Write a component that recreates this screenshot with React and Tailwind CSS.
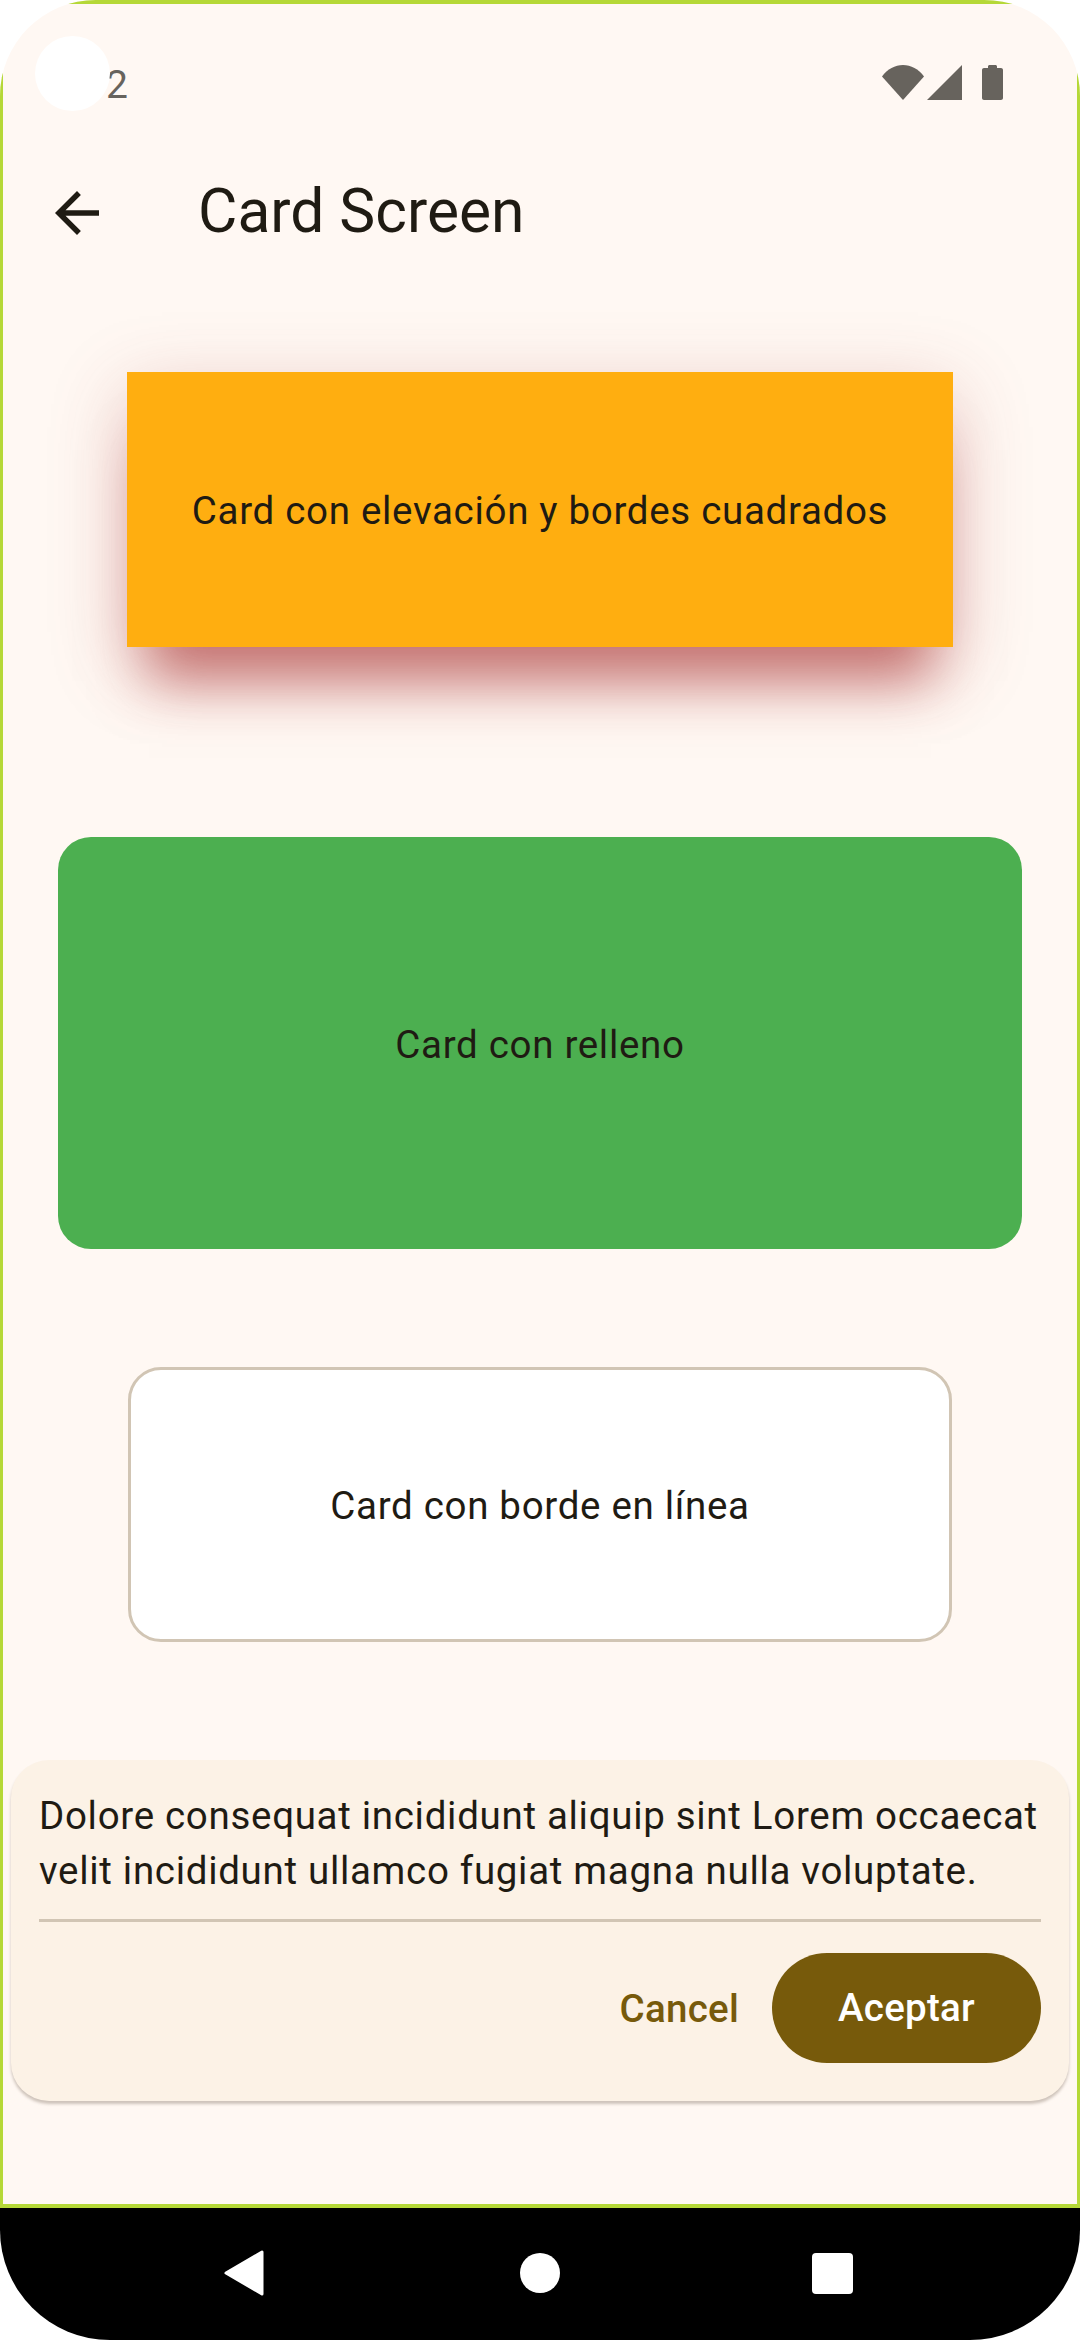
// App.jsx
function StatusIcons() {
  return (
    <div className="flex items-center">
      <svg width="42" height="35" viewBox="0 0 42 35" className="text-[#67635d]" fill="currentColor">
        <path d="M0 11.5C5.5 4 13 0 21 0s15.500 4 21 11.500L21 35z" />
      </svg>
      <svg width="35" height="35" viewBox="0 0 35 35" className="ml-[3px] text-[#67635d]" fill="currentColor">
        <path d="M35 0v35H0z" />
      </svg>
      <svg width="21" height="35" viewBox="0 0 21 35" className="ml-[20px] text-[#67635d]" fill="currentColor">
        <path d="M6 3V1.500C6 .7 6.700 0 7.500 0h6c.8 0 1.500.7 1.500 1.500V3h4c1.100 0 2 .9 2 2v28c0 1.100-.9 2-2 2H2c-1.100 0-2-.9-2-2V5c0-1.100.9-2 2-2z" />
      </svg>
    </div>
  );
}

function Card({ className, children }) {
  return (
    <div className={`flex items-center justify-center pt-[2px] text-[38.5px] leading-[55px] tracking-[0.69px] text-[#1f1b13] ${className}`}>
      {children}
    </div>
  );
}

export default function App() {
  return (
    <div className="flex h-[2340px] w-[1080px] flex-col overflow-hidden bg-white font-['Roboto',sans-serif]">
      {/* el borde verde queda recortado por las esquinas */}
      <div className="h-[2208px] overflow-hidden rounded-t-[96px]">
        <div className="relative flex h-full flex-col items-center border-x-[3px] border-t-[4px] border-b-[4px] border-[#b5d837] bg-[#fff8f3]">
          {/* status bar */}
          <div className="flex h-[121px] w-full items-start justify-between pt-[61px] pr-[74px] pl-[103px]">
            <span className="-mt-[3px] text-[39px] leading-[46px] text-[#67635d]">2</span>
            <StatusIcons />
          </div>
          <div className="absolute top-[32px] left-[32px] size-[75px] rounded-full bg-white" />

          {/* top app bar */}
          <div className="flex h-[176px] w-full items-center pl-[41px]">
            <svg width="66" height="66" viewBox="0 0 24 24" fill="#1f1b13">
              <path d="M20 11H7.830l5.590-5.590L12 4l-8 8 8 8 1.410-1.410L7.830 13H20v-2z" />
            </svg>
            <h1 className="-mt-[3px] ml-[88px] text-[60.5px] leading-[77px] font-normal text-[#1f1b13]">Card Screen</h1>
          </div>

          <Card className="mt-[71px] h-[275px] w-[826px] bg-[#ffae10] shadow-[0_56px_52px_-22px_rgba(165,40,40,0.55),0_20px_70px_rgba(165,60,60,0.28)]">
            Card con elevación y bordes cuadrados
          </Card>
          <Card className="mt-[190px] h-[412px] w-[964px] rounded-[33px] bg-[#4caf50]">
            Card con relleno
          </Card>
          <Card className="mt-[118px] h-[275px] w-[824px] rounded-[33px] border-[3px] border-[#d1c5b4] bg-white">
            Card con borde en línea
          </Card>

          {/* dialogo */}
          <div className="mt-[118px] h-[341px] w-[1058px] rounded-[38px] bg-[#fcf2e6] px-[28px] pt-[28px] shadow-[0_3px_3px_rgba(60,40,20,0.25)]">
            <p className="text-[38.5px] leading-[55px] tracking-[0.69px] text-[#1f1b13]">
              Dolore consequat incididunt aliquip sint Lorem occaecat velit incididunt ullamco fugiat magna nulla voluptate.
            </p>
            <div className="mt-[21px] h-[3px] bg-[#d1c5b4]" />
            <div className="mt-[31px] flex items-center justify-end">
              <button className="text-[38.5px] leading-[55px] font-medium tracking-[0.28px] text-[#775a0b]">Cancel</button>
              <button className="ml-[33px] flex h-[110px] w-[269px] items-center justify-center rounded-full bg-[#775a0b] text-[38.5px] font-medium tracking-[0.28px] text-white">
                Aceptar
              </button>
            </div>
          </div>
        </div>
      </div>

      {/* barra de navegacion */}
      <div className="flex h-[132px] items-center rounded-b-[110px] bg-black pb-[2px] pl-[224px]">
        <svg width="40" height="46" viewBox="0 0 40 46" fill="white" stroke="white" strokeWidth="3" strokeLinejoin="round">
          <path d="M38 2v42L2 23z" />
        </svg>
        <div className="ml-[256px] size-[40px] rounded-full bg-white" />
        <div className="ml-[252px] size-[41px] rounded-[4px] bg-white" />
      </div>
    </div>
  );
}
